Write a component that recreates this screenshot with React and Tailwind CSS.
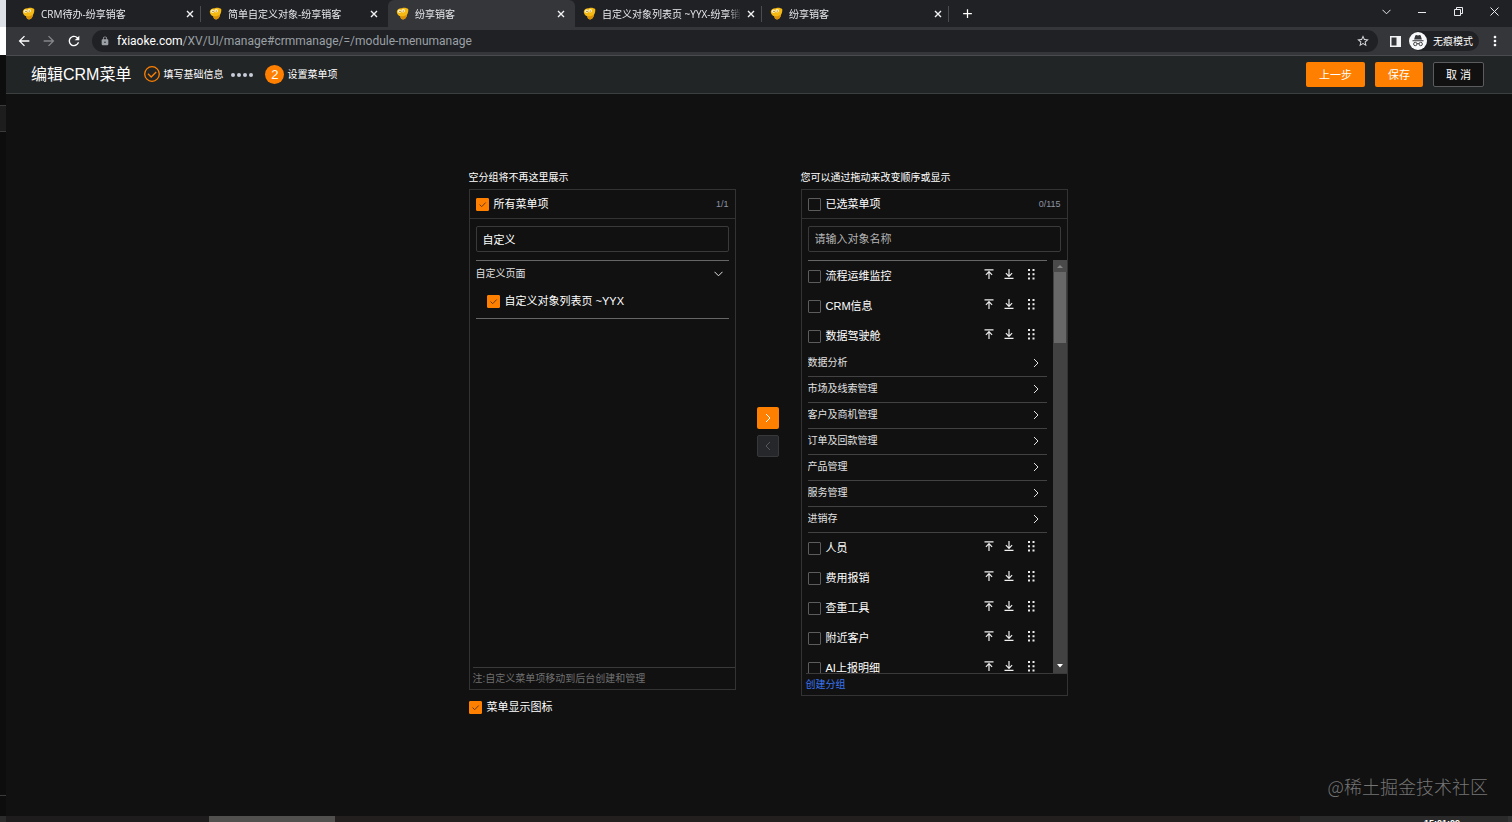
import React from "react";
import { MdArrowBack, MdArrowForward, MdRefresh, MdLock, MdStarBorder, MdMoreVert, MdAdd } from "react-icons/md";

const UI_FONT = "font-['Liberation_Sans','Noto_Sans_CJK_SC',sans-serif]";
const CHROME_FONT = "font-['Open_Sans','Noto_Sans_CJK_SC',sans-serif]";

function Cross({ className }) {
  return (
    <svg viewBox="0 0 8 8" className={className} fill="none" stroke="currentColor" strokeWidth="1.4" aria-hidden="true">
      <path d="M1 1l6 6M7 1L1 7" />
    </svg>
  );
}

function Favicon() {
  return (
    <svg viewBox="0 0 13 13" className="size-[13px] shrink-0" aria-hidden="true">
      <path d="M0.8 4.2C1.4 1.8 4 0.9 6 1.3 7.600 0.3 11 0.9 12.300 2.200 12.500 5 11.700 6.400 11.100 7.600 10.900 9.900 9.200 12.400 7.400 12.400 5.200 12.400 4.200 10.800 4.300 9.200 2.400 8.800 0.500 6.800 0.800 4.200z" fill="#f5b914" />
      <path d="M4.600 9c2 .6 4.500 0 6.500-1.600-.3 2.600-2.100 4.900-4.100 4.900C5.100 12.200 4.400 10.400 4.600 9z" fill="#d98f06" />
      <circle cx="3.600" cy="4.300" r="1.700" fill="#fff3c4" />
      <circle cx="7.200" cy="3.700" r="1.800" fill="#fff3c4" />
      <circle cx="4" cy="4.400" r="0.600" fill="#7a4a00" />
      <circle cx="7.200" cy="4" r="0.600" fill="#7a4a00" />
    </svg>
  );
}

function Tab({ title, active, divider }) {
  return (
    <div
      role="tab"
      aria-selected={!!active}
      className={
        "flex h-full w-[187px] min-w-0 items-center gap-1.5 rounded-t-md pl-2 pr-2 " +
        (active ? "bg-[#35363a]" : "")
      }
    >
      <Favicon />
      <span className="min-w-0 flex-1 overflow-hidden whitespace-nowrap text-[10px] leading-4 text-[#e8eaed] mask-r-from-90%">{title}</span>
      <button type="button" aria-label="关闭标签页" className={"shrink-0 text-[#f1f3f4] " + (divider ? "" : "mr-0.5")}>
        <Cross className="size-2" />
      </button>
      {divider && <span className="-mr-2 h-4 w-px shrink-0 bg-[#4a4c50]" />}
    </div>
  );
}

function Browser() {
  return (
    <div className={CHROME_FONT}>
      <div className="flex h-[27px] items-stretch bg-[#202124] pl-2">
        <div role="tablist" className="flex min-w-0">
          <Tab title="CRM待办-纷享销客" divider />
          <Tab title="简单自定义对象-纷享销客" />
          <Tab title="纷享销客" active />
          <Tab title="自定义对象列表页 ~YYX-纷享销客" divider />
          <Tab title="纷享销客" divider />
        </div>
        <button type="button" aria-label="新标签页" className="ml-[11px] text-white">
          <MdAdd className="size-[15px]" />
        </button>
        <div className="ml-auto flex items-center pb-1 text-[#e8eaed]">
          <button type="button" aria-label="搜索标签页" className="grid w-9 place-items-center">
            <svg viewBox="0 0 9 6" className="h-1.5 w-[9px]" fill="none" stroke="currentColor"><path d="M.5.8l4 4 4-4" /></svg>
          </button>
          <button type="button" aria-label="最小化" className="grid w-9 place-items-center">
            <svg viewBox="0 0 8 8" className="size-2" stroke="currentColor"><path d="M0 4.500h8" /></svg>
          </button>
          <button type="button" aria-label="还原" className="grid w-9 place-items-center">
            <svg viewBox="0 0 9 9" className="size-[9px]" fill="none" stroke="currentColor"><path d="M.5 2.500h6v6h-6zM2.500 2.500v-2h6v6h-2" /></svg>
          </button>
          <button type="button" aria-label="关闭" className="grid w-9 place-items-center">
            <svg viewBox="0 0 9 9" className="size-[9px]" fill="none" stroke="currentColor"><path d="M.5.5l8 8M8.500.5l-8 8" /></svg>
          </button>
        </div>
      </div>
      <div className="flex h-[29px] items-center border-b border-[#4a4b4e] bg-[#35363a] pl-[10px] pr-[9px]">
        <button type="button" aria-label="后退" className="text-white"><MdArrowBack className="size-4" /></button>
        <button type="button" aria-label="前进" className="ml-[9px] text-[#85878a]"><MdArrowForward className="size-4" /></button>
        <button type="button" aria-label="重新加载" className="ml-[9px] text-white"><MdRefresh className="size-4" /></button>
        <div className="ml-[10px] flex h-[22px] min-w-0 flex-1 items-center rounded-full bg-[#202124] px-2">
          <MdLock className="size-[10px] text-[#9aa0a6]" />
          <p className="ml-[7px] flex-1 truncate font-['Roboto',sans-serif] text-[12px] leading-4 text-[#9aa0a6]">
            <span className="text-white">fxiaoke.com</span>/XV/UI/manage#crmmanage/=/module-menumanage
          </p>
          <button type="button" aria-label="收藏" className="text-[#dadce0]"><MdStarBorder className="size-[14px]" /></button>
        </div>
        <button type="button" aria-label="侧边栏" className="ml-3 text-[#f1f3f4]">
          <svg viewBox="0 0 11 11" className="size-[11px]"><path d="M0 0h11v11H0zM1.500 1.500v8h5v-8z" fill="currentColor" fillRule="evenodd" /></svg>
        </button>
        <div className="ml-2 flex h-5 items-center gap-1.5 rounded-full bg-[#202124] pr-1.5">
          <svg viewBox="0 0 18 18" className="size-[18px]" aria-hidden="true">
            <circle cx="9" cy="9" r="9" fill="#f8f9fa" />
            <path d="M6.300 3.500l1-.4 1.700.5 1.700-.5 1 .4 1.200 4H5.100zM3.500 8.200h11v1h-11z" fill="#35363a" />
            <circle cx="6.300" cy="12" r="1.700" fill="none" stroke="#35363a" strokeWidth=".9" />
            <circle cx="11.700" cy="12" r="1.700" fill="none" stroke="#35363a" strokeWidth=".9" />
            <path d="M8 11.800q1-.6 2 0" fill="none" stroke="#35363a" strokeWidth=".9" />
          </svg>
          <span className="text-[10px] leading-4 text-white">无痕模式</span>
        </div>
        <button type="button" aria-label="更多" className="ml-2 text-white"><MdMoreVert className="size-4" /></button>
      </div>
    </div>
  );
}

function Header() {
  return (
    <header className="flex h-[38px] items-center border-b border-[#3c3f40] bg-[#222526] pl-[25px] pr-7 text-white">
      <h1 className="text-base leading-6">编辑CRM菜单</h1>
      <div className="ml-3 flex items-center text-[10px] leading-4">
        <svg viewBox="0 0 18 18" className="mr-0.5 size-[18px]" fill="none" stroke="#ff8000" strokeWidth="1.300" aria-hidden="true">
          <circle cx="9" cy="8" r="7.300" />
          <path d="M5 7.800l3.200 3.200L13.200 6" />
        </svg>
        <span>填写基础信息</span>
        <span className="ml-2 flex gap-0.5" aria-hidden="true">
          <i className="size-1 rounded-full bg-[#c8cdda]" />
          <i className="size-1 rounded-full bg-[#c8cdda]" />
          <i className="size-1 rounded-full bg-[#c8cdda]" />
          <i className="size-1 rounded-full bg-[#c8cdda]" />
        </span>
        <span className="ml-3 mr-[3px] grid size-[19px] place-items-center rounded-full bg-[#ff8000] text-[13px]">2</span>
        <span>设置菜单项</span>
      </div>
      <div className="ml-auto flex gap-[10px] text-[11px] leading-4">
        <button type="button" className="h-[25px] rounded-xs bg-[#ff8000] px-[13px]">上一步</button>
        <button type="button" className="h-[25px] rounded-xs bg-[#ff8000] px-[13px]">保存</button>
        <button type="button" className="h-[25px] rounded-xs border border-[#5a5c5e] bg-[#111] px-3">取 消</button>
      </div>
    </header>
  );
}

function Check({ id, checked, children, className = "" }) {
  return (
    <label htmlFor={id} className={"flex items-center gap-[5px] text-[11px] leading-4 text-white " + className}>
      <span className="grid size-[13px] shrink-0">
        <input
          id={id}
          type="checkbox"
          defaultChecked={checked}
          className="peer col-start-1 row-start-1 size-[13px] appearance-none rounded-[1px] border border-[#5c5c5c] bg-transparent checked:border-[#ff8000] checked:bg-[#ff8000]"
        />
        <svg viewBox="0 0 13 13" className="pointer-events-none invisible col-start-1 row-start-1 size-[13px] peer-checked:visible" fill="none" stroke="#6b3a08" aria-hidden="true">
          <path d="M3.500 6.500l2.200 2.200 4-4.200" />
        </svg>
      </span>
      <span>{children}</span>
    </label>
  );
}

function PanelTop({ id, checked, title, count, placeholder, value }) {
  return (
    <>
      <div className="flex h-[29px] items-center justify-between border-b border-[#333] px-1.5">
        <Check id={id} checked={checked}>{title}</Check>
        <span className="text-[9px] leading-4 text-[#8d93a3]">{count}</span>
      </div>
      <div className="px-1.5 pb-2 pt-[7px]">
        <input
          type="text"
          aria-label={title}
          defaultValue={value}
          placeholder={placeholder}
          className="block h-[26px] w-full rounded-xs border border-[#3a3a3a] bg-transparent px-1.5 text-[11px] text-white placeholder:text-[#b5b5b5]"
        />
      </div>
    </>
  );
}

function RowActions() {
  return (
    <span className="flex items-center pb-1 text-[#eee]">
      <button type="button" aria-label="置顶" className="mr-[10px]">
        <svg viewBox="0 0 10 10" className="size-[10px]" fill="none" stroke="currentColor" strokeWidth="1.200"><path d="M.5.8h9M5 10V3M1.900 5.800L5 2.700l3.100 3.100" /></svg>
      </button>
      <button type="button" aria-label="置底" className="mr-[14px]">
        <svg viewBox="0 0 10 10" className="size-[10px]" fill="none" stroke="currentColor" strokeWidth="1.200"><path d="M.5 9.300h9M5 0v7M1.900 4.200L5 7.300l3.100-3.100" /></svg>
      </button>
      <svg viewBox="0 0 7 11" className="h-[11px] w-[7px]" fill="currentColor" aria-hidden="true">
        <path d="M0 0h2v2H0zM4.500 0h2v2h-2zM0 4.200h2v2H0zM4.500 4.200h2v2h-2zM0 8.400h2v2H0zM4.500 8.400h2v2h-2z" />
      </svg>
    </span>
  );
}

function Item({ id, name }) {
  return (
    <li className="flex h-[30px] items-center justify-between pr-3">
      <Check id={id}>{name}</Check>
      <RowActions />
    </li>
  );
}

function Group({ name }) {
  return (
    <li className="border-b border-[#424242]">
      <button type="button" className="flex h-[25px] w-full items-center justify-between pb-0.5 pr-2 text-[10px] leading-4 text-[#e2e2e2]">
        {name}
        <svg viewBox="0 0 6 10" className="h-[10px] w-1.5" fill="none" stroke="currentColor" aria-hidden="true"><path d="M1 1l4 4-4 4" /></svg>
      </button>
    </li>
  );
}

const topItems = ["流程运维监控", "CRM信息", "数据驾驶舱"];
const groups = ["数据分析", "市场及线索管理", "客户及商机管理", "订单及回款管理", "产品管理", "服务管理", "进销存"];
const moreItems = ["人员", "费用报销", "查重工具", "附近客户", "AI上报明细"];

function Transfer() {
  return (
    <div className="flex items-start justify-center pl-[18px] pt-[76px] text-white">
      <section className="w-[267px]">
        <p className="mb-[3px] text-[10px] leading-4">空分组将不再这里展示</p>
        <div className="border border-[#333]">
          <PanelTop id="all" checked title="所有菜单项" count="1/1" value="自定义" />
          <div className="h-[407px] px-1.5">
            <div className="border-b border-t border-[#666]">
              <button type="button" className="flex h-[26px] w-full items-center justify-between pr-1.5 text-[10px] leading-4 text-[#e2e2e2]">
                自定义页面
                <svg viewBox="0 0 9 6" className="h-1.5 w-[9px]" fill="none" stroke="currentColor" aria-hidden="true"><path d="M.5.8l4 4 4-4" /></svg>
              </button>
              <Check id="custom-list" checked className="h-[31px] pb-[3px] pl-[11px]">自定义对象列表页 ~YYX</Check>
            </div>
          </div>
          <p className="ml-[3px] h-[22px] border-t border-[#3a3a3a] pt-[3px] text-[10px] leading-4 text-[#707070]">注:自定义菜单项移动到后台创建和管理</p>
        </div>
        <Check id="show-icons" checked className="mt-[9px]">菜单显示图标</Check>
      </section>

      <div className="flex w-[65px] flex-col items-center gap-1.5 pt-[237px]">
        <button type="button" aria-label="移到右侧" className="grid size-[22px] place-items-center rounded-xs bg-[#ff8000]">
          <svg viewBox="0 0 6 10" className="h-[10px] w-1.5" fill="none" stroke="#fff"><path d="M1 1l4 4-4 4" /></svg>
        </button>
        <button type="button" disabled aria-label="移到左侧" className="grid size-[22px] place-items-center rounded-xs border border-[#37383a] bg-[#26272a]">
          <svg viewBox="0 0 6 10" className="h-[10px] w-1.5" fill="none" stroke="#55585c"><path d="M5 1L1 5l4 4" /></svg>
        </button>
      </div>

      <section className="w-[267px]">
        <p className="mb-[3px] text-[10px] leading-4">您可以通过拖动来改变顺序或显示</p>
        <div className="border border-[#333]">
          <PanelTop id="picked" title="已选菜单项" count="0/115" placeholder="请输入对象名称" />
          <div className="flex h-[413px]">
            <ul className="ml-1.5 mr-1.5 flex-1 overflow-y-auto border-t border-[#666] [scrollbar-width:none]">
              {topItems.map((n, i) => <Item key={n} id={"top-" + i} name={n} />)}
              {groups.map((n) => <Group key={n} name={n} />)}
              {moreItems.map((n, i) => <Item key={n} id={"more-" + i} name={n} />)}
            </ul>
            <div className="flex w-[14px] flex-col items-center bg-[#424242]" aria-hidden="true">
              <svg viewBox="0 0 14 12" className="h-3 w-[14px] shrink-0"><path d="M0 0h14v12H0z" fill="#4a4a4a" /><path d="M4 8h6L7 5z" fill="#868686" /></svg>
              <span className="h-[71px] w-3 bg-[#686868]" />
              <svg viewBox="0 0 14 14" className="mt-auto size-[14px] shrink-0"><path d="M4 5h6L7 8.500z" fill="#fff" /></svg>
            </div>
          </div>
          <div className="ml-1 h-[22px] border-t border-[#3a3a3a] pt-[3px] text-[10px] leading-4">
            <a href="#create" className="block text-[#3a76f0]">创建分组</a>
          </div>
        </div>
      </section>
    </div>
  );
}

export default function App() {
  return (
    <div className={"flex min-h-screen flex-col bg-[#111] " + UI_FONT}>
      <div className="flex flex-1">
        <div className="flex w-1.5 shrink-0 flex-col bg-[#0d0d0d]" aria-hidden="true">
          <span className="h-[27px] bg-[#dee1e6]" />
          <span className="h-[28px] bg-white" />
          <span className="mt-[50px] h-[27px] border-y border-[#3a3a3a] bg-[#1d1d1d]" />
          <span className="mb-5 mt-auto h-px bg-[#3a3a3a]" />
        </div>
        <div className="relative flex min-w-0 flex-1 flex-col">
          <Browser />
          <Header />
          <main className="flex-1"><Transfer /></main>
          <p className="absolute bottom-[18px] right-6 text-[18px] leading-6 text-[#757575] font-['Noto_Sans_CJK_SC',sans-serif] font-light">@稀土掘金技术社区</p>
        </div>
      </div>
      <footer className="flex h-1.5 overflow-hidden bg-[#231f1e]">
        <span className="w-1.5 bg-[#2b2b2b]" />
        <span className="w-[203px] bg-[#1e1c1d]" />
        <span className="w-[126px] bg-[#52504e]" />
        <span className="ml-auto flex w-[212px] items-start justify-end border-r-4 border-[#333] bg-[#2a2a2a] pr-12 pt-[3px] text-[9px] font-bold leading-[9px] text-white">15:01:09</span>
      </footer>
    </div>
  );
}
